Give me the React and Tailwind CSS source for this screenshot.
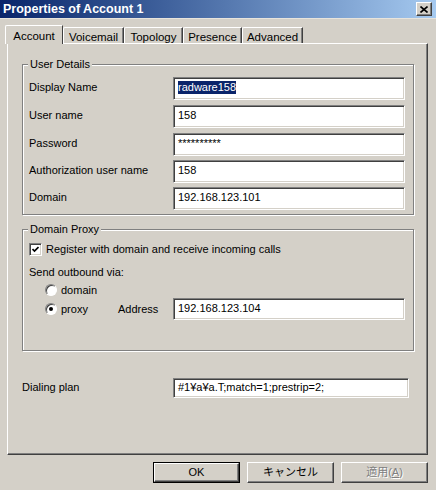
import { useState } from "react";

const sunken =
  "bg-white border border-t-[#808080] border-l-[#808080] border-b-white border-r-white shadow-[inset_1px_1px_0_#404040,inset_-1px_-1px_0_#d4d0c8]";

const raised =
  "bg-[#d4d0c8] border border-t-white border-l-white border-b-[#404040] border-r-[#404040] shadow-[inset_-1px_-1px_0_#808080]";

const userFields = [
  { label: "Display Name", value: "radware158", selected: true, row: "mt-0" },
  { label: "User name", value: "158", row: "mt-[5px]" },
  { label: "Password", value: "**********", row: "mt-[5px]" },
  { label: "Authorization user name", value: "158", row: "mt-[4px]" },
  { label: "Domain", value: "192.168.123.101", row: "mt-[4px]" },
];

const tabs = [
  { name: "Account", w: "w-[58px]" },
  { name: "Voicemail", w: "w-[61px]" },
  { name: "Topology", w: "w-[59px]" },
  { name: "Presence", w: "w-[59px]" },
  { name: "Advanced", w: "w-[61px]" },
];

function TextBox({ value, selected, className = "" }) {
  return (
    <div className={`${sunken} flex items-center pl-[4px] pb-[2px] ${className}`}>
      {selected ? (
        <span className="bg-[#0a246a] text-white leading-[13px]">{value}</span>
      ) : (
        <span className="leading-[13px]">{value}</span>
      )}
    </div>
  );
}

function GroupBox({ title, className = "", children }) {
  return (
    <div
      className={`relative border border-[#808080] shadow-[inset_1px_1px_0_#fff,1px_1px_0_#fff] ${className}`}
    >
      <span className="absolute left-[5px] -top-[8px] bg-[#d4d0c8] px-[2px] leading-[14px]">
        {title}
      </span>
      {children}
    </div>
  );
}

function Radio({ checked }) {
  return (
    <span className="relative flex h-[12px] w-[12px] items-center justify-center rounded-full border border-t-[#808080] border-l-[#808080] border-b-white border-r-white bg-white shadow-[inset_1px_1px_0_#404040]">
      {checked && <span className="h-[4px] w-[4px] rounded-full bg-black" />}
    </span>
  );
}

function Button({ children, primary, disabled }) {
  const frame = primary ? "border border-black" : "";
  return (
    <div className={`h-[21px] w-[87px] ${frame}`}>
      <div
        className={`${raised} flex h-full w-full items-center justify-center ${
          disabled ? "text-[#808080] [text-shadow:1px_1px_0_#fff]" : "text-black"
        }`}
      >
        {children}
      </div>
    </div>
  );
}

export default function App() {
  const [tab, setTab] = useState("Account");
  const [register, setRegister] = useState(true);
  const [via, setVia] = useState("proxy");

  return (
    <div className="h-[490px] w-[436px] overflow-hidden bg-[#d4d0c8] font-['Liberation_Sans','Noto_Sans_CJK_JP',sans-serif] text-[11px] text-black">
      {/* caption */}
      <div className="flex h-[18px] items-center justify-between bg-gradient-to-r from-[#0a246a] to-[#a6caf0] pl-[3px] pr-[4px]">
        <span className="text-[12.5px] font-bold leading-none text-white">Properties of Account 1</span>
        <div className={`${raised} flex h-[14px] w-[16px] items-center justify-center`}>
          <svg width="8" height="7" viewBox="0 0 8 7">
            <path d="M0.5 0.5 L7.5 6.5 M7.5 0.5 L0.5 6.5" stroke="#000" strokeWidth="1.6" />
          </svg>
        </div>
      </div>
      <div className="h-px bg-[#e8e4dc]" />

      {/* tab strip */}
      <div className="mt-[6px] flex h-[18px] items-end pl-[5px] text-[11.5px]">
        {tabs.map((t) =>
          t.name === tab ? (
            <div
              key={t.name}
              onClick={() => setTab(t.name)}
              className={`relative z-10 -mb-px flex h-[19px] ${t.w} items-start justify-center rounded-tl-[2px] border-l border-t border-r border-l-white border-t-white border-r-[#404040] bg-[#d4d0c8] pt-[2px]`}
            >
              {t.name}
            </div>
          ) : (
            <div
              key={t.name}
              onClick={() => setTab(t.name)}
              className={`flex h-[16px] ${t.w} items-start justify-center rounded-tl-[2px] border-l border-t border-r border-l-white border-t-white border-r-[#404040] pt-[1px] shadow-[inset_-1px_0_0_#808080]`}
            >
              {t.name}
            </div>
          )
        )}
      </div>

      {/* tab page */}
      <div className={`${raised} ml-[7px] h-[412px] w-[421px] px-[14px] pt-[20px]`}>
        <GroupBox title="User Details" className="h-[151px] w-[392px] pl-[6px] pt-[12px]">
          {userFields.map((f) => (
            <div key={f.label} className={`flex h-[23px] items-center ${f.row}`}>
              <span className="w-[144px] pb-[2px]">{f.label}</span>
              <TextBox value={f.value} selected={f.selected} className="h-[23px] w-[232px]" />
            </div>
          ))}
        </GroupBox>

        <GroupBox title="Domain Proxy" className="mt-[14px] h-[122px] w-[392px] pl-[6px]">
          <div
            className="mt-[11px] flex h-[16px] cursor-default items-center gap-[4px]"
            onClick={() => setRegister(!register)}
          >
            <span className={`${sunken} flex h-[13px] w-[13px] items-center justify-center`}>
              {register && (
                <svg width="7" height="7" viewBox="0 0 7 7">
                  <path d="M0.5 3 L2.5 5 L6.5 1" fill="none" stroke="#000" strokeWidth="1.7" />
                </svg>
              )}
            </span>
            <span>Register with domain and receive incoming calls</span>
          </div>
          <div className="mt-[7px] flex h-[16px] items-center">Send outbound via:</div>
          <div
            className="ml-[16px] mt-[2px] flex h-[16px] items-center gap-[4px]"
            onClick={() => setVia("domain")}
          >
            <Radio checked={via === "domain"} />
            <span>domain</span>
          </div>
          <div className="flex h-[22px] items-center">
            <div
              className="ml-[16px] flex w-[128px] items-center gap-[4px]"
              onClick={() => setVia("proxy")}
            >
              <Radio checked={via === "proxy"} />
              <span className="w-[53px]">proxy</span>
              <span>Address</span>
            </div>
            <TextBox value="192.168.123.104" className="h-[22px] w-[232px]" />
          </div>
        </GroupBox>

        <div className="mt-[27px] flex h-[20px] items-center">
          <span className="w-[151px] pb-[1px]">Dialing plan</span>
          <TextBox value="#1¥a¥a.T;match=1;prestrip=2;" className="h-[20px] w-[236px]" />
        </div>
      </div>

      {/* buttons */}
      <div className="mt-[7px] flex justify-end gap-[7px] pr-[8px]">
        <Button primary>OK</Button>
        <Button>キャンセル</Button>
        <Button disabled>
          適用(<span className="underline">A</span>)
        </Button>
      </div>
    </div>
  );
}
